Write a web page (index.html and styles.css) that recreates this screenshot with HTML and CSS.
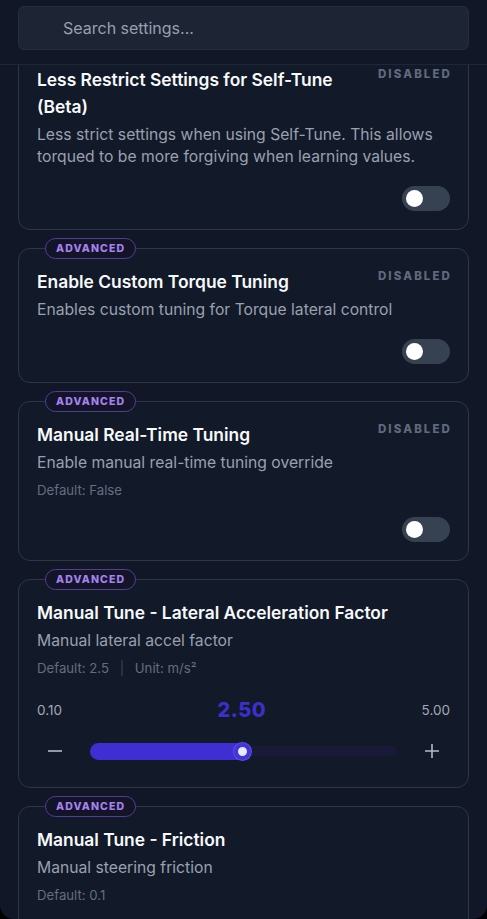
FILE: index.html
```html
<!DOCTYPE html>
<html lang="en">
<head>
    <meta charset="UTF-8">
    <meta name="viewport" content="width=device-width, initial-scale=1.0">
    <title>Settings</title>
    <link rel="stylesheet" href="styles.css">
</head>
<body>

    <div class="app">
        <!-- search header -->
        <div class="header">
            <input type="text" class="search" placeholder="Search settings...">
        </div>

        <div class="scroll">
            <div class="list">

                <div class="card">
                    <div class="card-head">
                        <div class="title">Less Restrict Settings for Self-Tune (Beta)</div>
                        <div class="state">DISABLED</div>
                    </div>
                    <div class="desc">Less strict settings when using Self-Tune. This allows torqued to be more forgiving when learning values.</div>
                    <div class="toggle-row"><span class="toggle"></span></div>
                </div>

                <div class="card">
                    <span class="badge">ADVANCED</span>
                    <div class="card-head">
                        <div class="title">Enable Custom Torque Tuning</div>
                        <div class="state">DISABLED</div>
                    </div>
                    <div class="desc">Enables custom tuning for Torque lateral control</div>
                    <div class="toggle-row"><span class="toggle"></span></div>
                </div>

                <div class="card">
                    <span class="badge">ADVANCED</span>
                    <div class="card-head">
                        <div class="title">Manual Real-Time Tuning</div>
                        <div class="state">DISABLED</div>
                    </div>
                    <div class="desc">Enable manual real-time tuning override</div>
                    <div class="meta">Default: False</div>
                    <div class="toggle-row"><span class="toggle"></span></div>
                </div>

                <div class="card">
                    <span class="badge">ADVANCED</span>
                    <div class="card-head">
                        <div class="title">Manual Tune - Lateral Acceleration Factor</div>
                    </div>
                    <div class="desc">Manual lateral accel factor</div>
                    <div class="meta">Default: 2.5 <span class="sep">|</span> Unit: m/s²</div>

                    <div class="slider-labels">
                        <span>0.10</span>
                        <span class="value">2.50</span>
                        <span>5.00</span>
                    </div>
                    <div class="slider-row">
                        <button class="step">
                            <svg width="16" height="16" viewBox="0 0 16 16"><path d="M1 8h14" stroke="#b5bac4" stroke-width="1.6"/></svg>
                        </button>
                        <div class="track">
                            <div class="fill" style="width: 52%;"><span class="thumb"></span></div>
                        </div>
                        <button class="step">
                            <svg width="16" height="16" viewBox="0 0 16 16"><path d="M1 8h14M8 1v14" stroke="#b5bac4" stroke-width="1.6"/></svg>
                        </button>
                    </div>
                </div>

                <div class="card">
                    <span class="badge">ADVANCED</span>
                    <div class="card-head">
                        <div class="title">Manual Tune - Friction</div>
                    </div>
                    <div class="desc">Manual steering friction</div>
                    <div class="meta">Default: 0.1</div>
                    <div class="toggle-row"><span class="toggle"></span></div>
                </div>

            </div>
        </div>
    </div>

</body>
</html>
```

FILE: styles.css
```css
html {
    background-color: #000;
}

body {
    font-family: 'Inter', 'Liberation Sans', sans-serif;
    margin: 0;
    padding: 0;
}

.app {
    height: 100vh;
    background-color: #111726;
    border-radius: 0 0 14px 14px;
    overflow: hidden;
    display: flex;
    flex-direction: column;
}

.header {
    padding: 6px 18px 14px;
    border-bottom: 1px solid #1f2636;
    position: relative;
    z-index: 2;
    background-color: #111726;
}

.search {
    box-sizing: border-box;
    width: 100%;
    height: 44px;
    padding: 0 0 0 44px;
    font-family: 'Inter', 'Liberation Sans', sans-serif;
    font-size: 16px;
    color: #e5e7eb;
    background-color: #1d2434;
    border: 1px solid #252d3d;
    border-radius: 6px;
    outline: none;
}

.search::placeholder {
    color: #98a0ae;
}

.scroll {
    flex: 1;
    overflow: hidden;
    padding: 0 18px;
}

.list {
    margin-top: -19px;
    display: flex;
    flex-direction: column;
    gap: 18px;
}

.card {
    position: relative;
    padding: 19px 18px 18px;
    background-color: #121929;
    border: 1px solid #2f3747;
    border-radius: 12px;
}

.badge {
    position: absolute;
    top: -11px;
    left: 26px;
    height: 19px;
    line-height: 19px;
    padding: 0 10px;
    font-size: 10.5px;
    font-weight: 800;
    letter-spacing: 1.1px;
    color: #a582f0;
    background-color: #141428;
    border: 1px solid #523f93;
    border-radius: 12px;
}

.card-head {
    display: flex;
    justify-content: space-between;
    align-items: flex-start;
    gap: 16px;
}

.title {
    font-size: 17.4px;
    font-weight: 600;
    line-height: 27px;
    color: #f8f9fb;
}

.state {
    margin-top: 1px;
    font-size: 11.5px;
    font-weight: 800;
    line-height: 14px;
    letter-spacing: 2.1px;
    margin-right: -2px;
    color: #606a7c;
    white-space: nowrap;
}

.desc {
    margin-top: 4px;
    font-size: 15.7px;
    line-height: 22px;
    color: #9aa1ae;
}

.meta {
    margin-top: 7px;
    font-size: 13.2px;
    line-height: 18px;
    color: #656e7e;
}

.meta .sep {
    margin: 0 7px;
    color: #3e4656;
}

.toggle-row {
    margin-top: 18px;
    display: flex;
    justify-content: flex-end;
}

.toggle {
    position: relative;
    width: 48px;
    height: 25px;
    background-color: #364152;
    border-radius: 13px;
}

.toggle::after {
    content: '';
    position: absolute;
    top: 4px;
    left: 4px;
    width: 17px;
    height: 17px;
    background-color: #fff;
    border-radius: 50%;
}

.slider-labels {
    margin-top: 19px;
    display: flex;
    justify-content: space-between;
    align-items: center;
    height: 28px;
    font-size: 13.5px;
    color: #a3a9b5;
}

.slider-labels .value {
    font-size: 20px;
    font-weight: 800;
    color: #3b30c9;
    letter-spacing: 0.5px;
}

.slider-row {
    margin-top: 10px;
    margin-bottom: 1px;
    height: 34px;
    display: flex;
    align-items: center;
    gap: 17px;
}

.step {
    width: 36px;
    height: 34px;
    padding: 0;
    background: none;
    border: none;
    display: flex;
    justify-content: center;
    align-items: center;
    cursor: pointer;
}

.track {
    flex: 1;
    height: 10px;
    background-color: #181a38;
    border-radius: 5px;
    display: flex;
    align-items: center;
}

.fill {
    position: relative;
    height: 17px;
    background-color: #3f2fd2;
    border-radius: 9px;
}

.thumb {
    position: absolute;
    right: -1px;
    top: 0;
    width: 17px;
    height: 17px;
    box-sizing: border-box;
    border: 4px solid #4335d8;
    background-color: #e8e9ff;
    border-radius: 50%;
    box-shadow: 0 0 0 1px #5a4fe6;
}
```
